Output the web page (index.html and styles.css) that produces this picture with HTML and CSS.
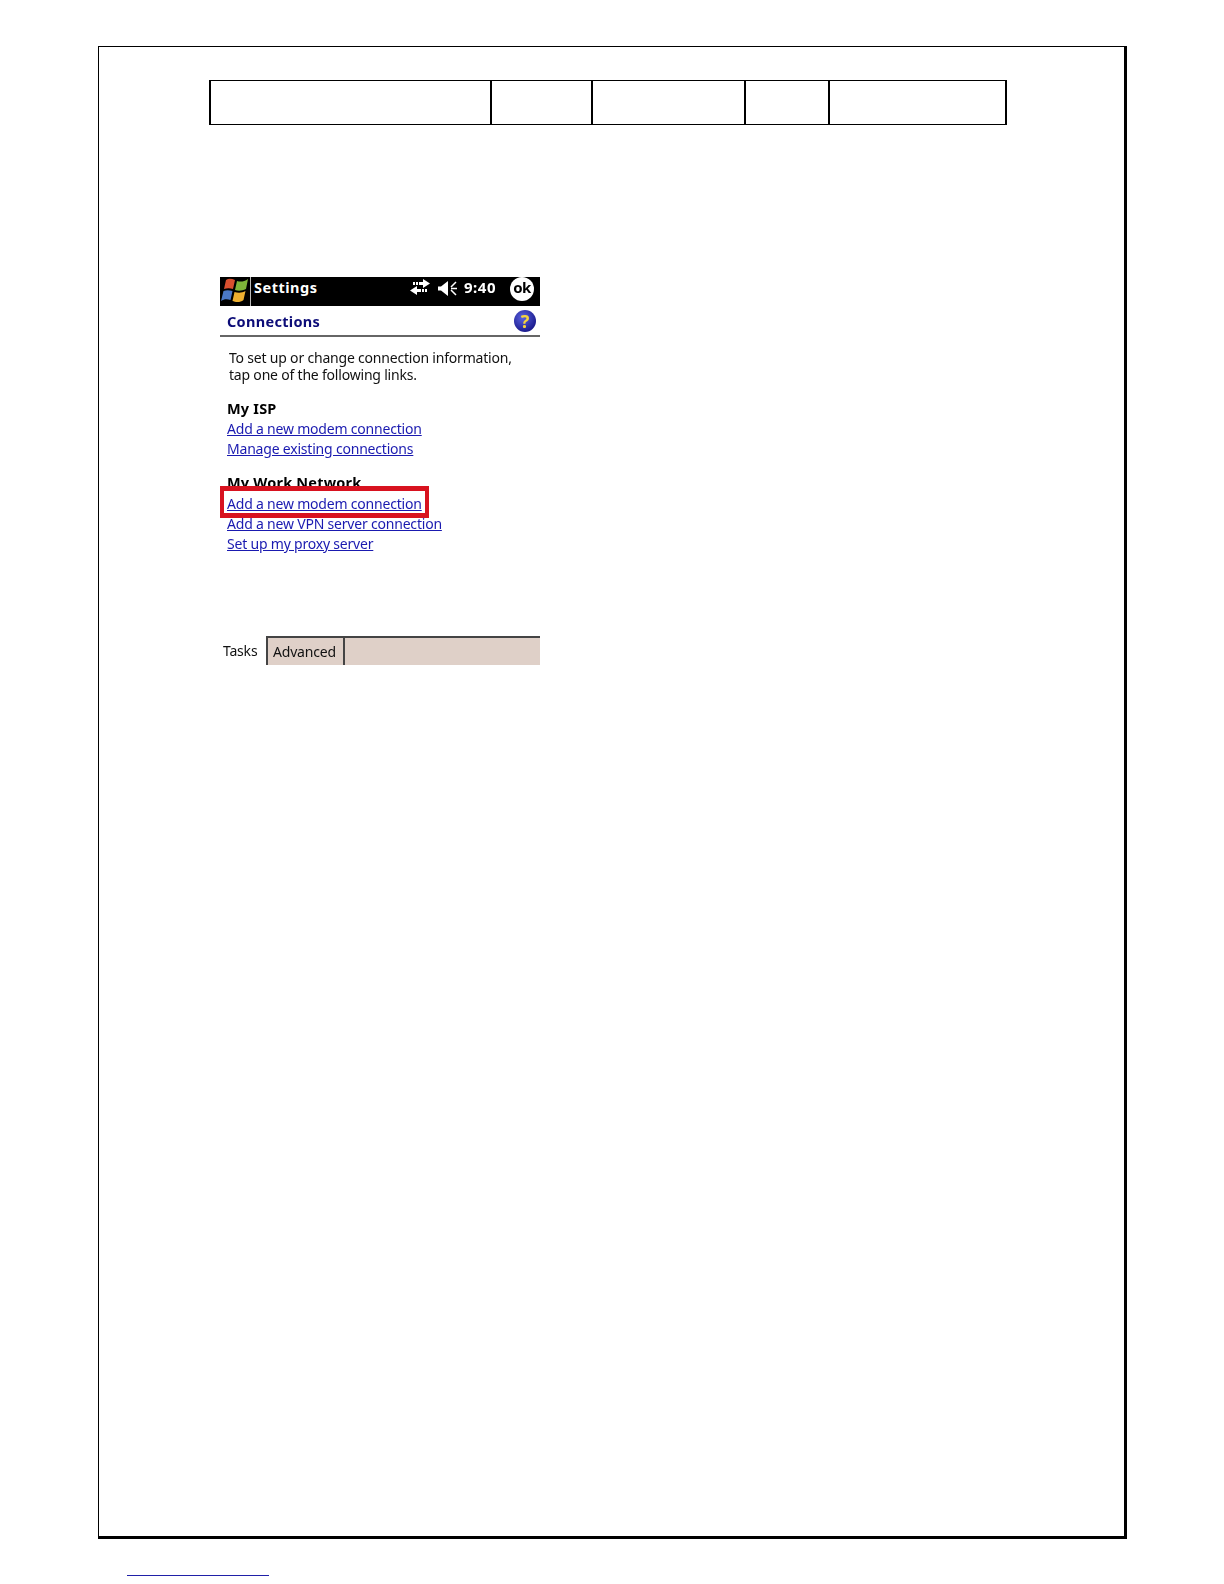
FILE: index.html
```html
<!DOCTYPE html>
<html lang="en">
<head>
<meta charset="utf-8">
<title>Connections</title>
<link rel="stylesheet" href="styles.css">
</head>
<body>
<div class="page">
  <div class="doc-table">
    <div class="doc-cell"></div>
    <div class="doc-cell"></div>
    <div class="doc-cell"></div>
    <div class="doc-cell"></div>
    <div class="doc-cell"></div>
  </div>
  <div class="device">
    <div class="titlebar">
      <svg class="flag" viewBox="0 0 29 27" aria-hidden="true">
        <path d="M6 3 C9 1 12 2 15 3 L13 12 C10 11 7 11 4 12 Z" fill="#d9502f"/>
        <path d="M17 4 C20 5 24 5 28 2 L26 12 C22 14 18 14 15 13 Z" fill="#7fb53a"/>
        <path d="M3.5 14 C6 13 9 13 12.5 14 L10.5 23 C7 22 4 22 1 24 Z" fill="#4a78c8"/>
        <path d="M14.500 15 C18 16 22 16 25.500 14 L23.500 23 C20 26 15 25 12.500 24 Z" fill="#eeb030"/>
      </svg>
      <span class="app-name">Settings</span>
      <svg class="sync" viewBox="0 0 20 16" aria-hidden="true">
        <path d="M3 3h2v3H3zM6 3h2v3H6zM9 3h4V0l7 4.500-7 4.500V6H9z" fill="#fff"/>
        <path d="M17 10h-2v3h2zM14 10h-2v3h2zM11 10H7V7l-7 4.500L7 16v-3h4z" fill="#fff"/>
      </svg>
      <svg class="speaker" viewBox="0 0 20 15" aria-hidden="true">
        <path d="M0 5.500h3L10 0v15L3 9.500H0z" fill="#fff"/>
        <path d="M18 1l-5 5M13 7.500h6M13 9l5 5" stroke="#fff" stroke-width="1.5" fill="none"/>
      </svg>
      <span class="clock">9:40</span>
      <span class="ok">ok</span>
    </div>
    <div class="pagehead">
      <span class="pagehead-title">Connections</span>
      <span class="help">?</span>
    </div>
    <p class="intro">To set up or change connection information,<br>tap one of the following links.</p>
    <div class="group">
      <h2 class="group-title">My ISP</h2>
      <a class="link">Add a new modem connection</a>
      <a class="link">Manage existing connections</a>
    </div>
    <div class="group group-work">
      <h2 class="group-title">My Work Network</h2>
      <a class="link">Add a new modem connection</a>
      <a class="link">Add a new VPN server connection</a>
      <a class="link">Set up my proxy server</a>
    </div>
    <div class="tabs">
      <span class="tab tab-active">Tasks</span>
      <span class="tab tab-idle">Advanced</span>
      <span class="tab-rest"></span>
    </div>
    <div class="highlight"></div>
  </div>
</div>
<div class="footnote-rule"></div>
</body>
</html>
```
FILE: styles.css
```css
* { box-sizing: border-box; }
html, body { margin: 0; padding: 0; background: #fff; }
body { width: 1224px; height: 1584px; overflow: hidden; font-family: "Noto Sans", "DejaVu Sans", sans-serif; }

.page {
  margin: 46px 0 0 98px;
  width: 1029px;
  height: 1493px;
  border-top: 1px solid #000;
  border-left: 1px solid #000;
  border-right: 3px solid #000;
  border-bottom: 3px solid #000;
  padding: 33px 0 0 110px;
}

.doc-table {
  display: grid;
  grid-template-columns: 281px 101px 153px 84px 1fr;
  width: 798px;
  height: 45px;
  border: 1px solid #000;
  border-left-width: 2px;
  border-right-width: 2px;
}
.doc-cell { border-right: 2px solid #000; }
.doc-cell:last-child { border-right: 0; }

.device {
  position: relative;
  margin: 152px 0 0 11px;
  width: 320px;
  height: 388px;
  color: #111;
  font-size: 14px;
  letter-spacing: -.2px;
  display: flex;
  flex-direction: column;
  filter: blur(.35px);
}

.titlebar {
  display: flex;
  align-items: flex-start;
  height: 29px;
  background: #000;
  color: #fff;
  font-weight: 700;
  font-size: 14.5px;
  letter-spacing: .5px;
  line-height: 20px;
}
.flag { width: 29px; height: 27px; margin-right: 1px; }
.app-name { border-left: 1px solid #bbb; height: 29px; padding-left: 3px; width: 160px; }
.sync { width: 20px; height: 16px; margin: 2px 8px 0 0; }
.speaker { width: 20px; height: 15px; margin: 4px 6px 0 0; }
.clock { width: 46px; font-size: 15px; }
.ok {
  width: 24px;
  height: 24px;
  border-radius: 50%;
  background: #fff;
  color: #000;
  text-align: center;
  line-height: 20px;
  font-size: 15px;
  letter-spacing: -.5px;
}

.pagehead {
  display: flex;
  align-items: center;
  justify-content: space-between;
  height: 31px;
  padding: 0 4px 0 7px;
  border-bottom: 2px solid #666;
}
.pagehead-title { color: #0c0c78; font-weight: 700; font-size: 14.5px; letter-spacing: .3px; }
.help {
  width: 22px;
  height: 22px;
  border-radius: 50%;
  background: radial-gradient(circle at 40% 35%, #5a62e0, #1a1a8c 75%);
  color: #f5d33c;
  font-weight: 700;
  font-size: 18px;
  line-height: 22px;
  text-align: center;
}

.intro { margin: 12px 0 0 9px; line-height: 17px; }

.group { margin: 15px 0 0 7px; display: flex; flex-direction: column; align-items: flex-start; }
.group-work { margin-top: 13px; }
.group-title { margin: 0 0 1px; font-size: 14.5px; font-weight: 700; line-height: 20px; color: #000; letter-spacing: .2px; }
.group-work .group-title { margin-bottom: 2px; }
.link { color: #1a1ab0; text-decoration: underline; line-height: 20px; }

.tabs {
  display: flex;
  margin-top: auto;
  height: 29px;
}
.tab-active { width: 48px; padding-left: 3px; line-height: 30px; border-right: 2px solid #444; }
.tab-idle {
  width: 77px;
  padding-left: 5px;
  background: #dfd0c8;
  border-top: 2px solid #444;
  border-right: 2px solid #444;
  line-height: 27px;
}
.tab-rest { flex: 1; background: #dfd0c8; border-top: 2px solid #444; }

.highlight {
  position: absolute;
  left: 0;
  top: 209px;
  width: 209px;
  height: 32px;
  border: solid #d8121f;
  border-width: 5px 4px;
}

.footnote-rule {
  margin: 36px 0 0 127px;
  width: 142px;
  border-top: 1px solid #2020a8;
}
```
